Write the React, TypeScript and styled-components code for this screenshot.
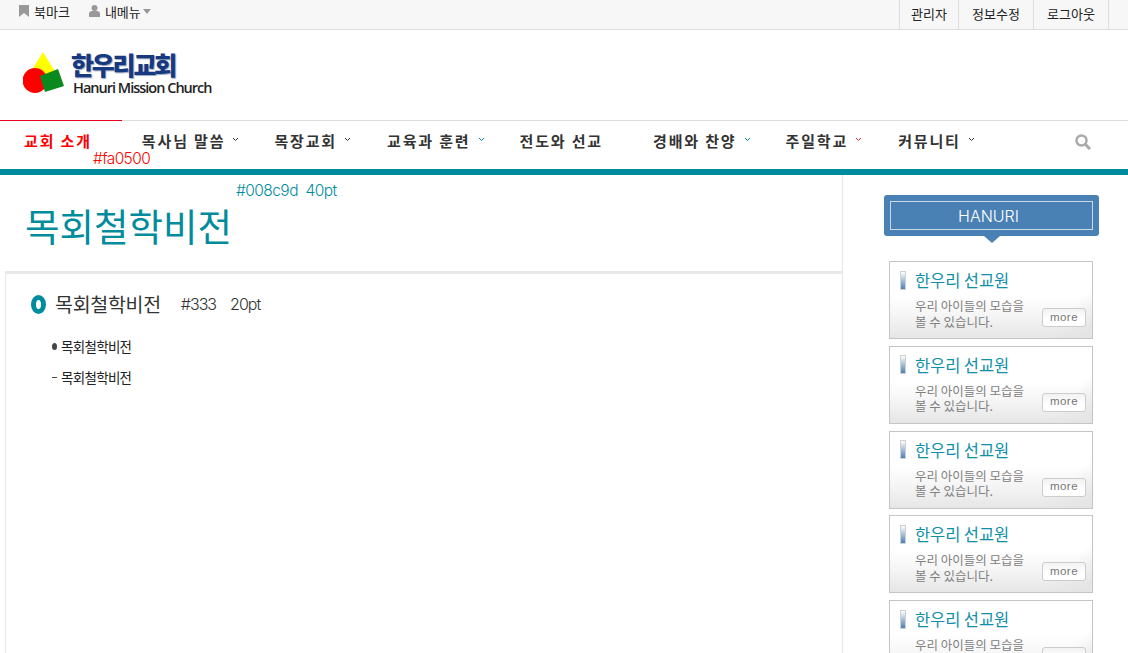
import styled, { createGlobalStyle } from "styled-components"

const GlobalStyle = createGlobalStyle`
    html, body {
        margin: 0;
        padding: 0;
        background: #fff;
        overflow: hidden;
    }
    * {
        box-sizing: border-box;
    }
    body {
        font-family: "Noto Sans CJK KR", "Liberation Sans", sans-serif;
        color: #333;
    }
`

const Page = styled.div`
    width: 1128px;
    height: 653px;
    overflow: hidden;
`

const TopBar = styled.div`
    display: flex;
    justify-content: space-between;
    height: 30px;
    padding: 0 19px;
    background: #f7f7f7;
    border-bottom: 1px solid #ddd;
`

const TopLeft = styled.div`
    display: flex;
    align-items: flex-start;
    gap: 19px;
    padding-top: 2px;
`

const TopLink = styled.span`
    display: flex;
    align-items: center;
    gap: 5px;
    height: 18px;
    font-size: 13px;
    color: #222;
`

const TopRight = styled.div`
    display: flex;
    border-left: 1px solid #ddd;
`

const TopMenu = styled.span<{ $w: number }>`
    display: flex;
    align-items: center;
    justify-content: center;
    width: ${(p) => p.$w}px;
    height: 29px;
    padding-bottom: 3px;
    border-right: 1px solid #ddd;
    font-size: 13px;
    color: #222;
`

const LogoBar = styled.div`
    display: flex;
    align-items: flex-start;
    gap: 3px;
    height: 90px;
    padding: 22px 0 0 23px;
`

const LogoText = styled.div`
    display: flex;
    flex-direction: column;
    margin-top: -3px;
`

const LogoKo = styled.span`
    font-size: 25px;
    font-weight: 900;
    line-height: 30px;
    letter-spacing: -2.2px;
    color: #16397f;
    text-shadow: 1px 1px 1px #9aa6c0;
`

const LogoEn = styled.span`
    padding-left: 2px;
    font-family: "Open Sans", "Liberation Sans", sans-serif;
    font-size: 14.5px;
    font-weight: 600;
    line-height: 18px;
    letter-spacing: -1px;
    color: #222;
`

const Nav = styled.nav`
    display: flex;
    height: 49px;
    border-top: 1px solid #ddd;
    position: relative;
`

const NavItem = styled.div<{ $left: number; $active?: boolean }>`
    display: flex;
    align-items: flex-start;
    gap: 7px;
    margin-left: ${(p) => p.$left}px;
    padding-top: 10px;
    font-size: 15px;
    font-weight: 700;
    line-height: 20px;
    letter-spacing: 1.85px;
    white-space: nowrap;
    color: ${(p) => (p.$active ? "#f00" : "#333")};
`

const ActiveLine = styled.span`
    position: absolute;
    left: 0;
    top: -1px;
    width: 122px;
    height: 1px;
    background: #e8001c;
`

const RedNote = styled.span`
    position: absolute;
    left: 93px;
    top: 29px;
    font-size: 15.5px;
    line-height: 18px;
    letter-spacing: -0.6px;
    font-family: "Inter", "Liberation Sans", sans-serif;
    font-weight: 300;
    color: #fa0500;
`

const Caret = styled.svg`
    margin-top: 6px;
    flex: none;
`

const SearchBox = styled.span`
    position: absolute;
    left: 1075px;
    top: 13px;
    display: flex;
`

const TealBar = styled.div`
    height: 6px;
    background: #008c9d;
`

const Main = styled.div`
    display: grid;
    grid-template-columns: 843px 1fr;
    height: 478px;
`

const Content = styled.div`
    padding-left: 5px;
    border-right: 1px solid #e5e5e5;
`

const TitleArea = styled.div`
    display: flex;
    align-items: flex-start;
    height: 99px;
    border-bottom: 3px solid #e8e8e8;
    padding-left: 20px;
`

const Title = styled.h1`
    margin: 25px 0 0;
    font-size: 37.5px;
    font-weight: 400;
    line-height: 50px;
    color: #008c9d;
`

const TitleNote = styled.span`
    margin: 6px 0 0 4px;
    font-family: "Inter", "Liberation Sans", sans-serif;
    font-size: 15.5px;
    font-weight: 300;
    line-height: 20px;
    letter-spacing: -0.55px;
    white-space: pre;
    color: #008c9d;
`

const Body = styled.div`
    height: 379px;
    padding: 16px 0 0 25px;
    border-left: 1px solid #e8e8e8;
`

const SectionHead = styled.div`
    display: flex;
    align-items: center;
    gap: 9px;
    height: 28px;
`

const Ring = styled.span`
    width: 15px;
    height: 19px;
    border: 5px solid #008c9d;
    border-radius: 50%;
`

const SectionTitle = styled.h2`
    margin: 0;
    font-size: 19.5px;
    font-weight: 400;
    line-height: 28px;
    letter-spacing: -0.3px;
    color: #333;
`

const SectionNote = styled.span`
    margin-left: 11px;
    font-family: "Inter", "Liberation Sans", sans-serif;
    font-size: 16px;
    font-weight: 300;
    letter-spacing: -1px;
    white-space: pre;
    color: #333;
`

const Lines = styled.div`
    display: flex;
    flex-direction: column;
    gap: 11px;
    margin-top: 18px;
    padding-left: 21px;
`

const Line = styled.div`
    display: flex;
    align-items: center;
    gap: 4px;
    height: 20px;
    font-size: 13.5px;
    letter-spacing: -0.7px;
    color: #222;
`

const Dot = styled.span`
    width: 5px;
    height: 7px;
    border-radius: 50%;
    background: #444;
`

const Dash = styled.span`
    width: 5px;
    height: 1px;
    background: #444;
`

const Side = styled.aside`
    display: flex;
    flex-direction: column;
    padding: 20px 0 0 41px;
`

const SideHead = styled.div`
    position: relative;
    width: 215px;
    height: 41px;
    padding: 6px;
    background: #4a81b5;
    border-radius: 3px;
`

const SideHeadInner = styled.div`
    display: flex;
    align-items: center;
    justify-content: center;
    width: 203px;
    height: 29px;
    padding-right: 6px;
    border: 1px solid #c9d9e8;
    font-family: "Inter", "Liberation Sans", sans-serif;
    font-size: 16px;
    font-weight: 300;
    color: #fff;
`

const SideArrow = styled.span`
    position: absolute;
    left: 100px;
    bottom: -7px;
    border-left: 8px solid transparent;
    border-right: 8px solid transparent;
    border-top: 7px solid #4a81b5;
`

const Cards = styled.div`
    display: flex;
    flex-direction: column;
    gap: 6.75px;
    margin: 25px 0 0 5px;
`

const Card = styled.div`
    position: relative;
    flex: none;
    width: 204px;
    height: 78px;
    padding: 7px 0 0 10px;
    border: 1px solid #c4c4c4;
    background:
        linear-gradient(135deg, rgba(255, 255, 255, 0) 82%, #e4e4e4 100%),
        linear-gradient(180deg, #fff 0, #fff 45%, #f6f6f6 68%, #e6e6e6 100%);
`

const CardTop = styled.div`
    display: flex;
    align-items: center;
    gap: 9px;
    height: 22px;
`

const Meter = styled.span`
    width: 6px;
    height: 19px;
    border: 1px solid #d0d0d0;
    background: linear-gradient(180deg, #fff 0, #4a81b5 100%);
`

const CardTitle = styled.span`
    font-size: 16.5px;
    line-height: 22px;
    letter-spacing: -0.1px;
    color: #0f8fa8;
`

const CardText = styled.p`
    width: fit-content;
    margin: 7px 0 0 15px;
    font-size: 12.5px;
    line-height: 15.5px;
    color: #808080;
    white-space: nowrap;
`

const MoreBtn = styled.span`
    position: absolute;
    right: 6px;
    bottom: 11px;
    display: flex;
    align-items: center;
    justify-content: center;
    width: 44px;
    height: 19px;
    padding-bottom: 2px;
    border: 1px solid #ccc;
    border-radius: 3px;
    background: linear-gradient(180deg, #f2f2f2 0, #fff 60%);
    font-family: "Liberation Sans", sans-serif;
    font-size: 11.5px;
    letter-spacing: 0.5px;
    color: #777;
`

const navItems = [
    { label: "목사님 말씀", left: 50, caret: "#333" },
    { label: "목장교회", left: 35, caret: "#333" },
    { label: "교육과 훈련", left: 36, caret: "#008c9d" },
    { label: "전도와 선교", left: 35 },
    { label: "경배와 찬양", left: 50, caret: "#008c9d" },
    { label: "주일학교", left: 35, caret: "#c33" },
    { label: "커뮤니티", left: 36, caret: "#333" },
]

function NavCaret({ color }: { color: string }) {
    return (
        <Caret width="7" height="5" viewBox="0 0 7 5">
            <path d="M1 1l2.5 2.5L6 1" fill="none" stroke={color} strokeWidth="1" />
        </Caret>
    )
}

function Logo() {
    return (
        <svg width="45" height="44" viewBox="0 0 45 44">
            <path d="M20 0L33 21 L22 27 L10 16Z" fill="#ffff00" />
            <circle cx="12" cy="28.5" r="12.5" fill="#ff0000" />
            <path d="M17 24L35 17 L41 34 L22 40Z" fill="#0a8a1e" />
        </svg>
    )
}

function MissionCard() {
    return (
        <Card>
            <CardTop>
                <Meter />
                <CardTitle>한우리 선교원</CardTitle>
            </CardTop>
            <CardText>
                우리 아이들의 모습을
                <br />볼 수 있습니다.
            </CardText>
            <MoreBtn>more</MoreBtn>
        </Card>
    )
}

export default function App() {
    return (
        <Page>
            <GlobalStyle />
            <TopBar>
                <TopLeft>
                    <TopLink>
                        <svg width="10" height="12" viewBox="0 0 10 12">
                            <path d="M0 0h10v12L5 8 0 12z" fill="#999" />
                        </svg>
                        북마크
                    </TopLink>
                    <TopLink>
                        <svg width="11" height="12" viewBox="0 0 11 12">
                            <circle cx="5.5" cy="3" r="3" fill="#999" />
                            <path d="M0 12V8.5C0 7 1.5 6 3 6h5c1.5 0 3 1 3 2.5V12z" fill="#999" />
                        </svg>
                        <span>내메뉴</span>
                        <svg width="8" height="5" viewBox="0 0 8 5" style={{ marginLeft: -3 }}>
                            <path d="M0 0h8L4 5z" fill="#999" />
                        </svg>
                    </TopLink>
                </TopLeft>
                <TopRight>
                    <TopMenu $w={59}>관리자</TopMenu>
                    <TopMenu $w={75}>정보수정</TopMenu>
                    <TopMenu $w={75}>로그아웃</TopMenu>
                </TopRight>
            </TopBar>
            <LogoBar>
                <Logo />
                <LogoText>
                    <LogoKo>한우리교회</LogoKo>
                    <LogoEn>Hanuri Mission Church</LogoEn>
                </LogoText>
            </LogoBar>
            <Nav>
                <ActiveLine />
                <NavItem $left={24} $active>교회 소개</NavItem>
                <RedNote>#fa0500</RedNote>
                {navItems.map((item) => (
                    <NavItem key={item.label} $left={item.left}>
                        {item.label}
                        {item.caret && <NavCaret color={item.caret} />}
                    </NavItem>
                ))}
                <SearchBox>
                    <svg width="16" height="16" viewBox="0 0 16 16">
                        <circle cx="6.5" cy="6.5" r="5" fill="none" stroke="#aaa" strokeWidth="2.5" />
                        <path d="M10.5 10.5L15 15" stroke="#aaa" strokeWidth="3" />
                    </svg>
                </SearchBox>
            </Nav>
            <TealBar />
            <Main>
                <Content>
                    <TitleArea>
                        <Title>목회철학비전</Title>
                        <TitleNote>#008c9d  40pt</TitleNote>
                    </TitleArea>
                    <Body>
                        <SectionHead>
                            <Ring />
                            <SectionTitle>목회철학비전</SectionTitle>
                            <SectionNote>#333    20pt</SectionNote>
                        </SectionHead>
                        <Lines>
                            <Line><Dot />목회철학비전</Line>
                            <Line><Dash />목회철학비전</Line>
                        </Lines>
                    </Body>
                </Content>
                <Side>
                    <SideHead>
                        <SideHeadInner>HANURI</SideHeadInner>
                        <SideArrow />
                    </SideHead>
                    <Cards>
                        {[0, 1, 2, 3, 4].map((n) => (
                            <MissionCard key={n} />
                        ))}
                    </Cards>
                </Side>
            </Main>
        </Page>
    )
}
